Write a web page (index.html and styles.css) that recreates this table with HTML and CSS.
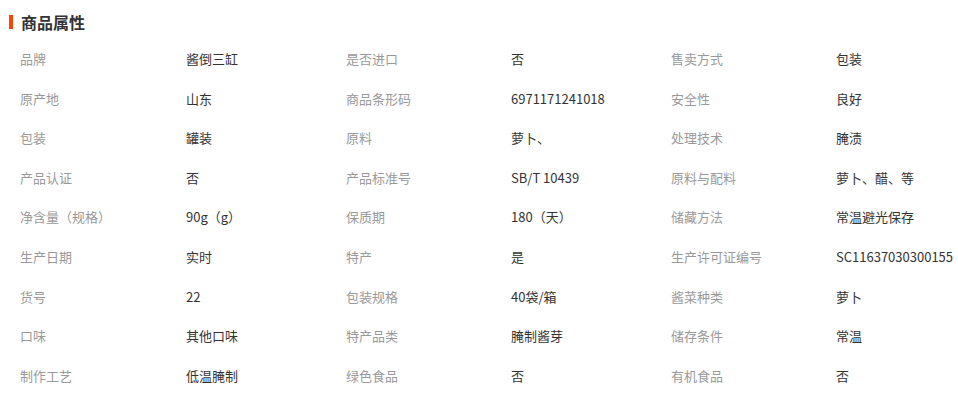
FILE: index.html
```html
<!DOCTYPE html>
<html lang="zh-CN">
<head>
<meta charset="utf-8">
<link rel="stylesheet" href="styles.css">
</head>
<body>
<div class="attrs">
  <h3 class="attrs-title"><span class="bar"></span>商品属性</h3>
  <div class="grid">
    <div class="k">品牌</div><div class="v">酱倒三缸</div>
    <div class="k">是否进口</div><div class="v">否</div>
    <div class="k">售卖方式</div><div class="v">包装</div>

    <div class="k">原产地</div><div class="v">山东</div>
    <div class="k">商品条形码</div><div class="v">6971171241018</div>
    <div class="k">安全性</div><div class="v">良好</div>

    <div class="k">包装</div><div class="v">罐装</div>
    <div class="k">原料</div><div class="v">萝卜、</div>
    <div class="k">处理技术</div><div class="v">腌渍</div>

    <div class="k">产品认证</div><div class="v">否</div>
    <div class="k">产品标准号</div><div class="v">SB/T 10439</div>
    <div class="k">原料与配料</div><div class="v">萝卜、醋、等</div>

    <div class="k">净含量（规格）</div><div class="v">90g（g）</div>
    <div class="k">保质期</div><div class="v">180（天）</div>
    <div class="k">储藏方法</div><div class="v">常温避光保存</div>

    <div class="k">生产日期</div><div class="v">实时</div>
    <div class="k">特产</div><div class="v">是</div>
    <div class="k">生产许可证编号</div><div class="v">SC11637030300155</div>

    <div class="k">货号</div><div class="v">22</div>
    <div class="k">包装规格</div><div class="v">40袋/箱</div>
    <div class="k">酱菜种类</div><div class="v">萝卜</div>

    <div class="k">口味</div><div class="v">其他口味</div>
    <div class="k">特产品类</div><div class="v">腌制酱芽</div>
    <div class="k">储存条件</div><div class="v">常温</div>

    <div class="k">制作工艺</div><div class="v">低温腌制</div>
    <div class="k">绿色食品</div><div class="v">否</div>
    <div class="k">有机食品</div><div class="v">否</div>
  </div>
</div>
</body>
</html>
```

FILE: styles.css
```css
html, body {
  margin: 0;
  padding: 0;
  background: #fff;
}
body {
  font-family: "Noto Sans CJK SC", "Noto Sans", sans-serif;
  font-size: 13px;
  color: #333;
}
.attrs {
  width: 958px;
}
.attrs-title {
  box-sizing: border-box;
  margin: 0;
  height: 39px;
  display: flex;
  align-items: center;
  padding-left: 9px;
  padding-top: 4px;
  font-size: 16px;
  font-weight: bold;
  color: #333;
  line-height: 20px;
}
.bar {
  width: 4px;
  height: 14px;
  background: #ff4400;
  margin-right: 8px;
  margin-top: 1px;
}
.grid {
  display: grid;
  grid-template-columns: 166px 160px 165px 160px 165px 1fr;
  grid-auto-rows: 39.6px;
  padding-left: 20px;
  margin-top: 0.2px;
}
.k, .v {
  display: flex;
  align-items: center;
  white-space: nowrap;
  line-height: 16px;
}
.k {
  color: #999;
}
.v {
  color: #333;
}
```
